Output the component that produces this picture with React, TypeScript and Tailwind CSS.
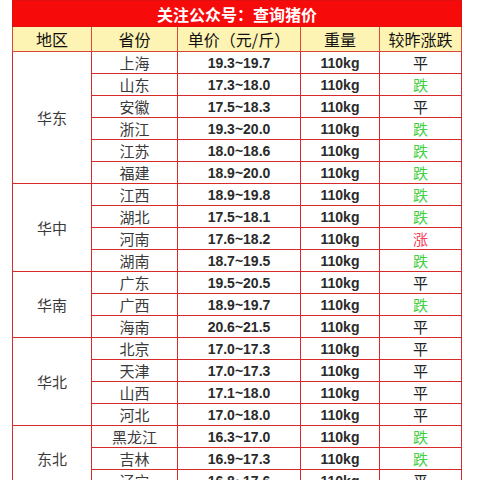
import React from "react";

type Row = { p: string; price: string; c: string };
type Region = { name: string; rows: Row[] };

const data: Region[] = [
  {
    name: "华东",
    rows: [
      { p: "上海", price: "19.3~19.7", c: "平" },
      { p: "山东", price: "17.3~18.0", c: "跌" },
      { p: "安徽", price: "17.5~18.3", c: "平" },
      { p: "浙江", price: "19.3~20.0", c: "跌" },
      { p: "江苏", price: "18.0~18.6", c: "跌" },
      { p: "福建", price: "18.9~20.0", c: "跌" },
    ],
  },
  {
    name: "华中",
    rows: [
      { p: "江西", price: "18.9~19.8", c: "跌" },
      { p: "湖北", price: "17.5~18.1", c: "跌" },
      { p: "河南", price: "17.6~18.2", c: "涨" },
      { p: "湖南", price: "18.7~19.5", c: "跌" },
    ],
  },
  {
    name: "华南",
    rows: [
      { p: "广东", price: "19.5~20.5", c: "平" },
      { p: "广西", price: "18.9~19.7", c: "跌" },
      { p: "海南", price: "20.6~21.5", c: "平" },
    ],
  },
  {
    name: "华北",
    rows: [
      { p: "北京", price: "17.0~17.3", c: "平" },
      { p: "天津", price: "17.0~17.3", c: "平" },
      { p: "山西", price: "17.1~18.0", c: "平" },
      { p: "河北", price: "17.0~18.0", c: "平" },
    ],
  },
  {
    name: "东北",
    rows: [
      { p: "黑龙江", price: "16.3~17.0", c: "跌" },
      { p: "吉林", price: "16.9~17.3", c: "跌" },
      { p: "辽宁", price: "16.8~17.6", c: "平" },
    ],
  },
];

const cjk = "font-['Noto_Sans_CJK_SC',sans-serif]";
const num = "font-['Liberation_Sans','Noto_Sans_CJK_SC',sans-serif]";

function changeColor(c: string) {
  if (c === "跌") return "text-[#3fcf3f]";
  if (c === "涨") return "text-[#f2405a]";
  return "text-[#222]";
}

export default function App() {
  return (
    <div className="w-[480px] h-[480px] overflow-hidden bg-white">
      <div className="pl-[12px]">
        <table className="border-collapse table-fixed w-[449px]">
          <colgroup>
            <col className="w-[79px]" />
            <col className="w-[86px]" />
            <col className="w-[123px]" />
            <col className="w-[79px]" />
            <col className="w-[82px]" />
          </colgroup>
          <thead>
            <tr className="h-[26px]">
              <th
                colSpan={5}
                className={`bg-[#f70a0a] text-white text-[16px] font-bold leading-none p-0 ${cjk} border border-[#e01010]`}
              >
                关注公众号：查询猪价
              </th>
            </tr>
            <tr className="h-[25px]">
              {["地区", "省份", "单价（元/斤）", "重量", "较昨涨跌"].map((h) => (
                <th
                  key={h}
                  className={`bg-[#fdf3b3] text-[#111] text-[16px] font-normal leading-none p-0 ${cjk} border border-[#d9483a]`}
                >
                  {h}
                </th>
              ))}
            </tr>
          </thead>
          <tbody>
            {data.map((r) =>
              r.rows.map((row, i) => (
                <tr key={row.p} className="h-[22px]">
                  {i === 0 && (
                    <td
                      rowSpan={r.rows.length}
                      className={`text-center align-middle text-[15px] text-[#3a3a3a] leading-none p-0 ${cjk} border border-[#d82a2a]`}
                    >
                      {r.name}
                    </td>
                  )}
                  <td
                    className={`text-center text-[15px] text-[#3a3a3a] leading-none p-0 ${cjk} border border-[#d82a2a]`}
                  >
                    {row.p}
                  </td>
                  <td
                    className={`text-center text-[14px] font-bold text-[#2a2a2a] leading-none p-0 ${num} border border-[#d82a2a]`}
                  >
                    {row.price}
                  </td>
                  <td
                    className={`text-center text-[14px] font-bold text-[#2a2a2a] leading-none p-0 ${num} border border-[#d82a2a]`}
                  >
                    110kg
                  </td>
                  <td
                    className={`text-center text-[15px] leading-none p-0 ${cjk} ${changeColor(row.c)} border border-[#d82a2a]`}
                  >
                    {row.c}
                  </td>
                </tr>
              ))
            )}
          </tbody>
        </table>
      </div>
    </div>
  );
}
